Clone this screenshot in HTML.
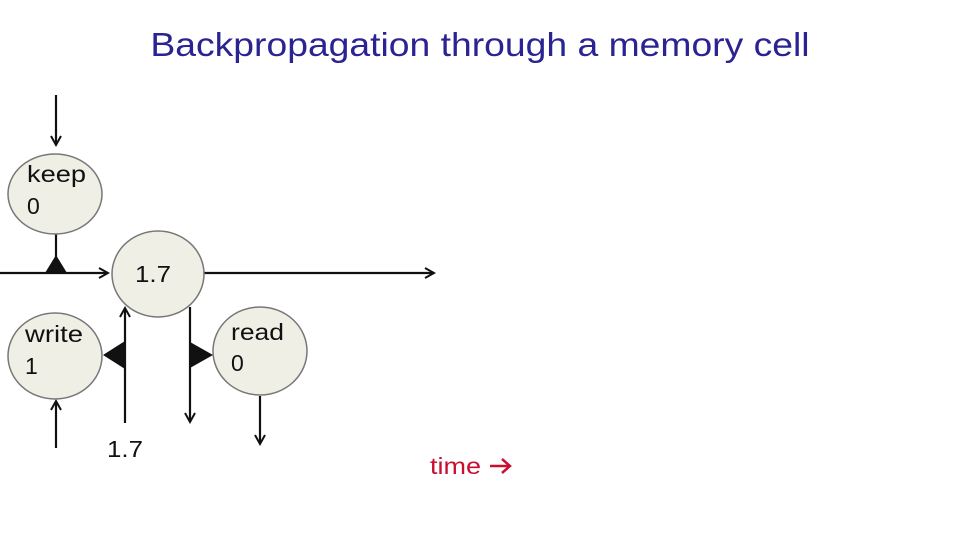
<!DOCTYPE html>
<html><head><style>
body{margin:0;width:960px;height:540px;background:#fff;overflow:hidden;font-family:"Liberation Sans",sans-serif}
.t{position:absolute;left:0;width:960px;top:26px;text-align:center;font-size:33px;color:#2b2391;transform:scaleX(1.13)}
</style></head><body>
<div class="t">Backpropagation through a memory cell</div>
<svg width="960" height="540" style="position:absolute;left:0;top:0" font-family="Liberation Sans, sans-serif">
<defs><marker id="a" markerWidth="12" markerHeight="12" refX="10" refY="6" orient="auto" markerUnits="userSpaceOnUse"><path d="M1,1 L10,6 L1,11" fill="none" stroke="#111" stroke-width="2"/></marker></defs>
<g stroke="#111" stroke-width="2.2" fill="none">
<line x1="0" y1="273" x2="108" y2="273" marker-end="url(#a)"/>
<line x1="204" y1="273" x2="434" y2="273" marker-end="url(#a)"/>
<line x1="56" y1="95" x2="56" y2="145" marker-end="url(#a)"/>
<line x1="56" y1="233" x2="56" y2="262"/>
<line x1="56" y1="448" x2="56" y2="401" marker-end="url(#a)"/>
<line x1="125" y1="423" x2="125" y2="308" marker-end="url(#a)"/>
<line x1="190" y1="307" x2="190" y2="422" marker-end="url(#a)"/>
<line x1="260" y1="396" x2="260" y2="444" marker-end="url(#a)"/>
</g>
<g fill="#111">
<path d="M45,273 L56,255 L67,273Z"/>
<path d="M103,355 L125,341 L125,369Z"/>
<path d="M190,342 L213,355 L190,368Z"/>
</g>
<g fill="#efefe6" stroke="#777" stroke-width="1.5">
<ellipse cx="55" cy="194" rx="47" ry="40"/>
<ellipse cx="158" cy="274" rx="46" ry="43"/>
<ellipse cx="55" cy="356" rx="47" ry="43"/>
<ellipse cx="260" cy="351" rx="47" ry="44"/>
</g>
<g fill="#111" font-size="23">
<text x="27" y="182" textLength="59" lengthAdjust="spacingAndGlyphs">keep</text><text x="27" y="214">0</text>
<text x="135" y="282" textLength="36" lengthAdjust="spacingAndGlyphs">1.7</text>
<text x="25" y="342" textLength="58" lengthAdjust="spacingAndGlyphs">write</text><text x="25" y="374">1</text>
<text x="231" y="340" textLength="53" lengthAdjust="spacingAndGlyphs">read</text><text x="231" y="371">0</text>
<text x="107" y="457" textLength="36" lengthAdjust="spacingAndGlyphs">1.7</text>
</g>
<text x="430" y="474" font-size="23" fill="#c8102e" textLength="51" lengthAdjust="spacingAndGlyphs">time</text>
<path d="M490,466 L509,466 M502,459 L510,466 L502,473" stroke="#c8102e" stroke-width="2.5" fill="none"/>
</svg>
</body></html>
